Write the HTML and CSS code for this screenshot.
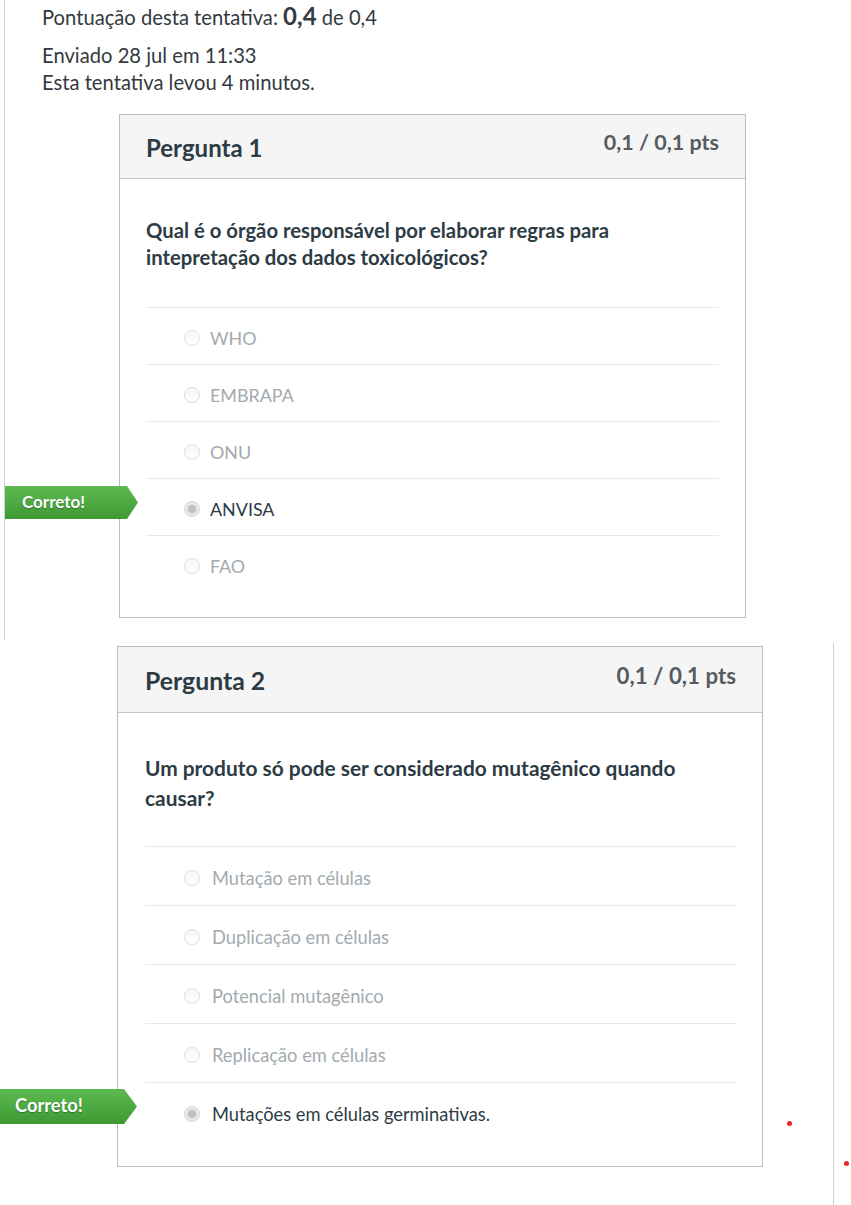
FILE: index.html
```html
<!DOCTYPE html>
<html>
<head>
    <meta charset="utf-8">
    <title>Resultados do teste</title>
    <link rel="stylesheet" href="styles.css">
</head>
<body>
    <div class="shot-top">
        <div class="summary">
            <div class="score">Pontuação desta tentativa: <strong>0,4</strong> de 0,4</div>
            <div>Enviado 28 jul em 11:33</div>
            <div>Esta tentativa levou 4 minutos.</div>
        </div>

        <div class="question">
            <div class="question-header">
                <div class="question-title">Pergunta 1</div>
                <div class="question-points">0,1 / 0,1 pts</div>
            </div>
            <div class="question-body">
                <div class="question-text">Qual é o órgão responsável por elaborar regras para intepretação dos dados toxicológicos?</div>
                <div class="answer"><span class="radio"></span>WHO</div>
                <div class="answer"><span class="radio"></span>EMBRAPA</div>
                <div class="answer"><span class="radio"></span>ONU</div>
                <div class="answer selected">
                    <span class="badge">Correto!</span>
                    <span class="radio"></span>ANVISA
                </div>
                <div class="answer"><span class="radio"></span>FAO</div>
            </div>
        </div>
    </div>

    <div class="shot-bottom">
        <div class="question question-large">
            <div class="question-header">
                <div class="question-title">Pergunta 2</div>
                <div class="question-points">0,1 / 0,1 pts</div>
            </div>
            <div class="question-body">
                <div class="question-text">Um produto só pode ser considerado mutagênico quando causar?</div>
                <div class="answer"><span class="radio"></span>Mutação em células</div>
                <div class="answer"><span class="radio"></span>Duplicação em células</div>
                <div class="answer"><span class="radio"></span>Potencial mutagênico</div>
                <div class="answer"><span class="radio"></span>Replicação em células</div>
                <div class="answer selected">
                    <span class="badge">Correto!</span>
                    <span class="radio"></span>Mutações em células germinativas.
                </div>
            </div>
        </div>

        <span class="dot dot-a"></span>
        <span class="dot dot-b"></span>
    </div>
</body>
</html>
```

FILE: styles.css
```css
body {
    margin: 0;
    background: #fff;
    color: #2d3b45;
    font-family: Lato, "Open Sans", sans-serif;
    overflow: hidden;
}

/* primeira captura */
.shot-top {
    margin-left: 4px;
    padding-bottom: 22px;
    border-left: 1px solid #d0d0d0;
}

.summary {
    padding: 2px 0 0 37px;
    font-size: 20.2px;
    line-height: 27px;
    color: #333a40;
}

.summary .score {
    height: 30px;
    line-height: 30px;
    margin-bottom: 10px;
}

.score strong {
    font-size: 24px;
    line-height: 20px;
}

.shot-top .question {
    margin: 18px 0 0 114px;
}

/* cartão da pergunta */
.question {
    box-sizing: border-box;
    width: 627px;
    background: #fff;
    border: 1px solid #b9bcbe;
}

.question-header {
    display: flex;
    justify-content: space-between;
    height: 63px;
    padding: 0 26px;
    background: #f5f5f5;
    border-bottom: 1px solid #c4c7c9;
}

.question-title {
    padding-top: 19px;
    font-size: 24px;
    line-height: 28px;
    font-weight: 700;
}

.question-points {
    padding-top: 13px;
    font-size: 21.5px;
    line-height: 28px;
    font-weight: 700;
    color: #555b60;
}

.question-body {
    padding: 38px 26px 25px;
}

.question-text {
    margin-bottom: 36px;
    font-size: 20.3px;
    line-height: 27px;
    font-weight: 700;
}

.answer {
    position: relative;
    display: flex;
    align-items: center;
    height: 52px;
    padding: 4px 0 0 38px;
    border-top: 1px solid #e8e9ea;
    font-size: 17.9px;
    color: #a2aaaf;
}

.answer.selected {
    color: #2d3b45;
}

.radio {
    box-sizing: border-box;
    width: 16px;
    height: 16px;
    margin-right: 10px;
    border: 1px solid #dcdfe1;
    border-radius: 50%;
    background: linear-gradient(#f6f6f6, #fff);
}

.selected .radio {
    border-color: #d4d6d8;
    background: radial-gradient(circle, #c2c2c2 0 4px, #e9e9e9 4.6px);
}

.badge {
    position: absolute;
    left: -141px;
    top: 7px;
    box-sizing: border-box;
    width: 133px;
    height: 33px;
    padding-left: 17px;
    background: linear-gradient(#5dba50, #3e9934);
    clip-path: polygon(0 0, calc(100% - 11px) 0, 100% 50%, calc(100% - 11px) 100%, 0 100%);
    color: #fff;
    font-size: 17px;
    font-weight: 700;
    line-height: 31px;
    text-shadow: 0 1px 1px rgba(0,0,0,0.3);
}

/* segunda captura, um pouco maior */
.shot-bottom {
    position: relative;
    width: 833px;
    margin-top: 3px;
    padding: 3px 0 38px;
    border-right: 1px solid #d0d0d0;
}

.question-large {
    width: 646px;
    margin-left: 117px;
}

.question-large .question-header {
    height: 65px;
    padding: 0 26px 0 27px;
}

.question-large .question-title {
    padding-top: 19px;
    font-size: 24.8px;
    line-height: 29px;
}

.question-large .question-points {
    padding-top: 14px;
    font-size: 22.3px;
    line-height: 29px;
}

.question-large .question-body {
    padding: 40px 26px 25px 27px;
}

.question-large .question-text {
    margin-bottom: 33px;
    font-size: 20.9px;
    line-height: 30px;
}

.question-large .answer {
    height: 54px;
    padding-left: 39px;
    font-size: 18.3px;
}

.question-large .radio {
    width: 16px;
    height: 16px;
    margin-right: 12px;
}

.question-large .badge {
    left: -145px;
    top: 6px;
    width: 137px;
    height: 35px;
    padding-left: 15px;
    clip-path: polygon(0 0, calc(100% - 13px) 0, 100% 50%, calc(100% - 13px) 100%, 0 100%);
    font-size: 18.3px;
    line-height: 32px;
}

.dot {
    position: absolute;
    width: 5px;
    height: 5px;
    border-radius: 50%;
    background: #e8252b;
}

.dot-a {
    left: 787px;
    top: 478px;
}

.dot-b {
    left: 844px;
    top: 518px;
}
```
